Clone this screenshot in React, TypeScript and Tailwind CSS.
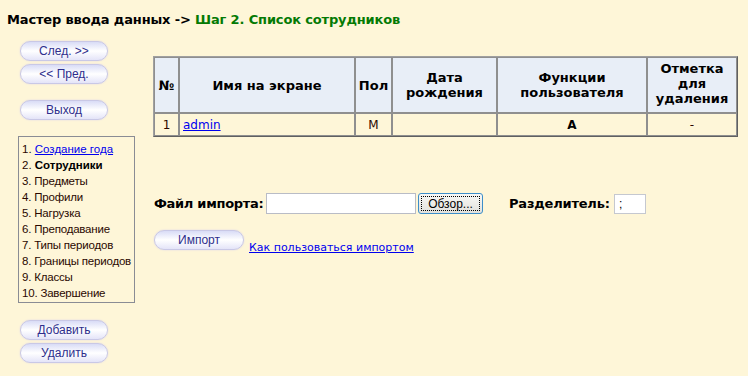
import React from "react";

const verdana = { fontFamily: '"DejaVu Sans", Verdana, sans-serif' };
const arial = { fontFamily: '"Liberation Sans", Arial, sans-serif' };

function PillBtn({ label, className = "" }: { label: string; className?: string }) {
  return (
    <div
      className={
        "flex h-[20px] shrink-0 items-center justify-center rounded-full border border-[#c9c8e6] bg-linear-to-b from-[#d9dcf6] via-white to-[#e4e4f8] text-[12px] text-[#2e2e8c] shadow-[0_0_2px_#ddd6ea] " +
        className
      }
      style={arial}
    >
      {label}
    </div>
  );
}

const steps = [
  "Предметы",
  "Профили",
  "Нагрузка",
  "Преподавание",
  "Типы периодов",
  "Границы периодов",
  "Классы",
  "Завершение",
];

export default function App() {
  return (
    <div className="min-h-[376px] w-[748px] bg-[#fef6d8] pt-[12px] text-black" style={verdana}>
      <div className="ml-[7px] h-[16px] whitespace-nowrap text-[13px] font-bold leading-[16px] tracking-[-0.15px]">
        Мастер ввода данных -&gt; <span className="text-[#047a04]">Шаг 2. Список сотрудников</span>
      </div>
      <div className="flex">
        {/* left column */}
        <div className="ml-[18px] flex w-[117px] shrink-0 flex-col">
          <PillBtn label="След. >>" className="ml-[2px] mt-[13px] w-[88px]" />
          <PillBtn label="<< Пред." className="ml-[2px] mt-[3px] w-[88px]" />
          <PillBtn label="Выход" className="ml-[2px] mt-[16px] w-[88px]" />
          <div
            className="mt-[16px] h-[167px] w-[117px] border border-[#8a8c94] pl-[3px] pt-[4px] text-[11.5px] leading-[16px] text-[#2a0800]"
            style={arial}
          >
            <div>
              1. <a className="text-[#0000ee] underline">Создание года</a>
            </div>
            <div>
              2. <span className="font-bold text-black">Сотрудники</span>
            </div>
            {steps.map((s, i) => (
              <div key={s} className="whitespace-nowrap tracking-[-0.2px]">
                {i + 3}. {s}
              </div>
            ))}
          </div>
          <PillBtn label="Добавить" className="ml-[2px] mt-[17px] w-[88px]" />
          <PillBtn label="Удалить" className="ml-[2px] mt-[3px] w-[88px]" />
        </div>

        {/* right column */}
        <div className="ml-[18px] flex flex-col">
          <table className="mt-[28px] w-[585px] table-fixed border-separate border-spacing-0 border border-t-[#a0a0a0] border-l-[#a0a0a0] border-r-[#606060] border-b-[#606060]">
            <thead>
              <tr className="bg-[#e8eef7] text-[13px] font-bold leading-[15px]">
                <th className="h-[56px] w-[25px] border border-[#8f8f8f] px-0">№</th>
                <th className="w-[176px] border border-[#8f8f8f] px-[2px]">Имя на экране</th>
                <th className="w-[37px] border border-[#8f8f8f] px-0">Пол</th>
                <th className="w-[105px] border border-[#8f8f8f] px-[2px]">Дата рождения</th>
                <th className="w-[150px] border border-[#8f8f8f] px-[2px]">Функции пользователя</th>
                <th className="w-[90px] border border-[#8f8f8f] px-[2px] pb-[3px]">Отметка для удаления</th>
              </tr>
            </thead>
            <tbody>
              <tr className="text-[12px] text-[#2a0800]">
                <td className="h-[23px] border border-[#8f8f8f] text-center">1</td>
                <td className="border border-[#8f8f8f] pl-[3px]">
                  <a className="text-[#0000ee] underline">admin</a>
                </td>
                <td className="border border-[#8f8f8f] text-center">М</td>
                <td className="border border-[#8f8f8f]"></td>
                <td className="border border-[#8f8f8f] text-center font-bold text-black">А</td>
                <td className="border border-[#8f8f8f] text-center">-</td>
              </tr>
            </tbody>
          </table>

          <div className="mt-[56px] flex h-[21px] items-center">
            <span className="ml-[1px] w-[112px] shrink-0 whitespace-nowrap text-[13px] font-bold tracking-[-0.3px]">Файл импорта:</span>
            <div className="h-[21px] w-[150px] shrink-0 border border-[#b9bcc6] bg-white"></div>
            <div className="ml-[2px] flex h-[21px] w-[65px] shrink-0 items-center justify-center rounded-[3px] border border-[#3d8ec9] bg-linear-to-b from-[#f8f8f6] to-[#e2e1dc] p-[2px]">
              <div
                className="flex h-full w-full items-center justify-center border border-dotted border-black text-[12px] leading-none text-black"
                style={arial}
              >
                Обзор...
              </div>
            </div>
            <span className="ml-[26px] w-[105px] shrink-0 whitespace-nowrap text-[13px] font-bold tracking-[-0.2px]">Разделитель:</span>
            <div className="flex h-[20px] w-[32px] shrink-0 items-center border border-[#c5c8d0] bg-white pl-[4px] text-[12px]" style={arial}>
              ;
            </div>
          </div>

          <div className="mt-[16px] flex items-end">
            <PillBtn label="Импорт" className="ml-[1px] w-[90px]" />
            <a className="mb-[-4px] ml-[5px] whitespace-nowrap text-[11px] leading-[13px] text-[#0000ee] underline">
              Как пользоваться импортом
            </a>
          </div>
        </div>
      </div>
    </div>
  );
}
